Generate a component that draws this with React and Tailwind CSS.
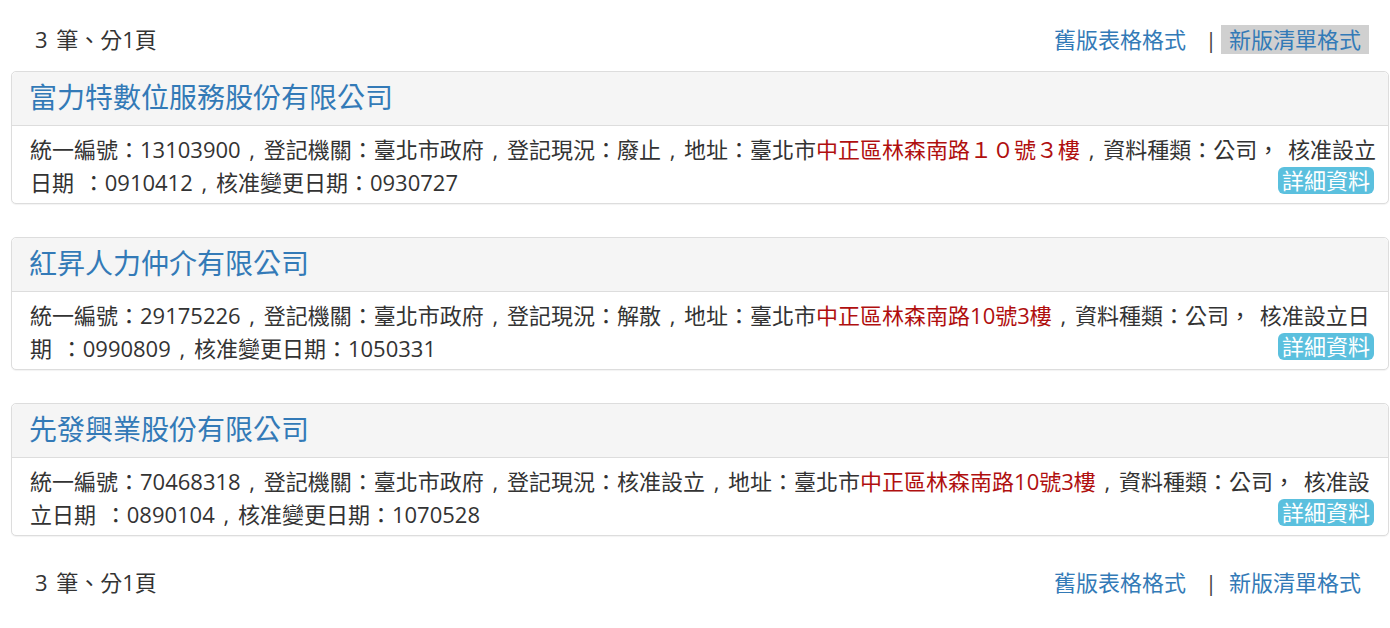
import React from 'react';

const companies = [
  {
    name: '富力特數位服務股份有限公司',
    id: '13103900',
    status: '廢止',
    addr: '中正區林森南路１０號３樓',
    setup: '0910412',
    change: '0930727',
  },
  {
    name: '紅昇人力仲介有限公司',
    id: '29175226',
    status: '解散',
    addr: '中正區林森南路10號3樓',
    setup: '0990809',
    change: '1050331',
  },
  {
    name: '先發興業股份有限公司',
    id: '70468318',
    status: '核准設立',
    addr: '中正區林森南路10號3樓',
    setup: '0890104',
    change: '1070528',
  },
];

const Pager = ({ active }) => (
  <div className="flex items-center justify-between pl-[35px] pr-[21px] text-[22px] leading-[29px]">
    <span className="[word-spacing:3px]">3 筆、分1頁</span>
    <div className="flex items-center">
      <a className="text-[#337ab7] cursor-pointer">舊版表格格式</a>
      <span className="ml-[19px] mr-[4px] text-[#444]">|</span>
      <a className={`px-[8px] text-[#337ab7] cursor-pointer ${active ? 'bg-[#d0d0d0]' : ''}`}>新版清單格式</a>
    </div>
  </div>
);

const CompanyCard = ({ c }) => (
  <div className="ml-[11px] mr-[1px] rounded-[5px] border border-[#ddd] bg-white shadow-[0_1px_1px_rgba(0,0,0,0.05)]">
    <div className="rounded-t-[5px] border-b border-[#ddd] bg-[#f5f5f5] pl-[17px] pr-4 pt-[8px] pb-[11px]">
      <a className="text-[28px] leading-[34px] text-[#337ab7] cursor-pointer">{c.name}</a>
    </div>
    <div className="pl-[18px] pr-[10px] pt-[7px] pb-[4px] text-[22px] leading-[33px] [word-spacing:3px]">
      統一編號：{c.id} , 登記機關：臺北市政府 , 登記現況：{c.status} , 地址：臺北市
      <span className="text-[#b00f0f]">{c.addr}</span> , 資料種類：公司， 核准設立日期 ：{c.setup} , 核准變更日期：{c.change}
      <span className="float-right mt-[1px] mr-[4px] rounded-[6px] bg-[#5bc0de] px-[4px] text-[22px] leading-[27px] text-white cursor-pointer [word-spacing:0]">詳細資料</span>
    </div>
  </div>
);

export default function App() {
  return (
    <div className="min-h-screen bg-white pt-[25px] text-[#333] font-['Open_Sans','Noto_Sans_CJK_TC',sans-serif]">
      <Pager active />
      <div className="mt-[17px] flex flex-col gap-[33px]">
        {companies.map((c) => (
          <CompanyCard key={c.id} c={c} />
        ))}
      </div>
      <div className="mt-[32px]">
        <Pager />
      </div>
    </div>
  );
}
